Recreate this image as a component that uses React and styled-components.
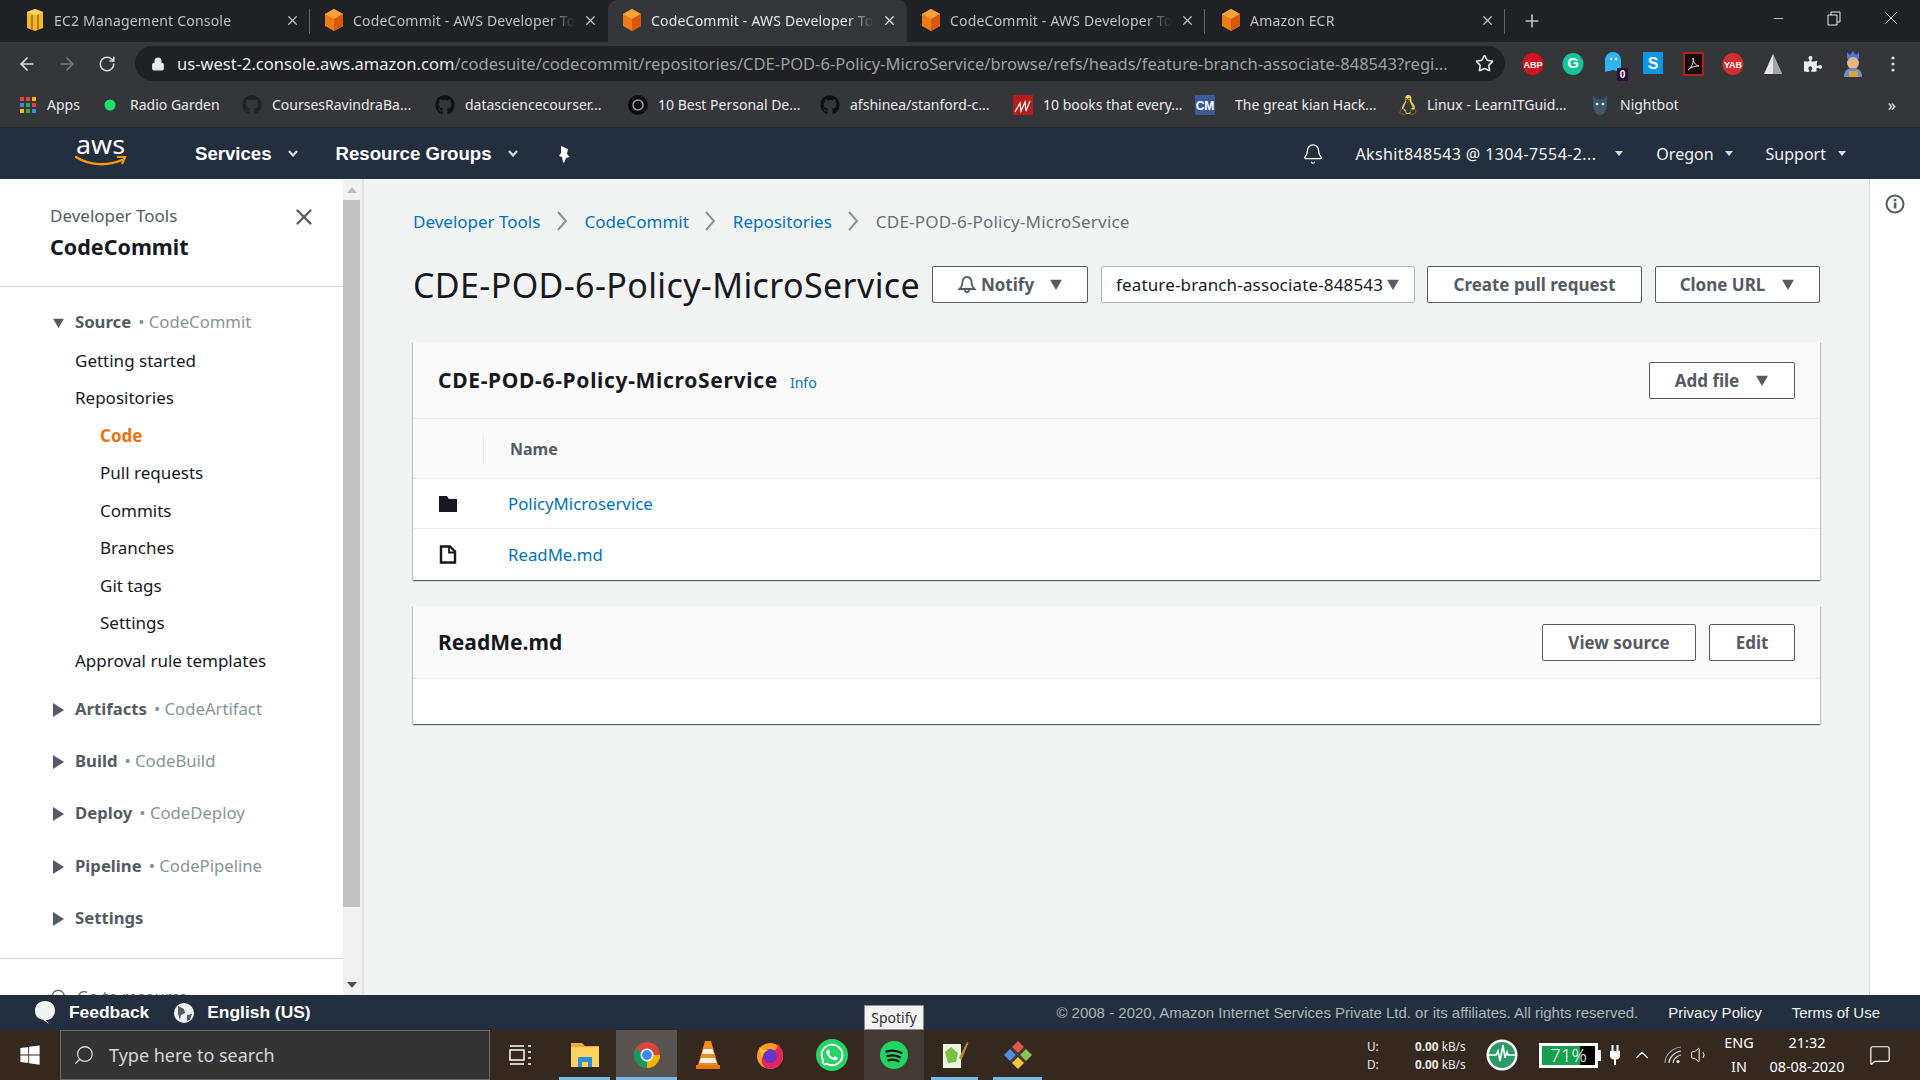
import React from 'react';
import styled, { createGlobalStyle } from 'styled-components';
import { FaGithub, FaWhatsapp, FaWindows, FaPuzzlePiece, FaLinux } from 'react-icons/fa';
import { ArrowLeft, ArrowRight, RotateCw, Lock, Star, Plus, Minus, X, Search, Bell, Volume1, ChevronUp, MessageSquare } from 'lucide-react';

const GlobalStyle = createGlobalStyle`
  html, body { margin: 0; padding: 0; height: 100%; overflow: hidden; }
  * { box-sizing: border-box; }
`;

const UI = `"Noto Sans", "Open Sans", sans-serif`;
const ARIAL = `"Liberation Sans", Arial, sans-serif`;

const Page = styled.div`
  width: 1920px;
  height: 1080px;
  display: flex;
  flex-direction: column;
  overflow: hidden;
  font-family: ${UI};
`;

/* browser chrome */
const TabStrip = styled.div`
  height: 42px;
  background: #202124;
  display: flex;
  align-items: stretch;
  padding-left: 18px;
  flex-shrink: 0;
`;

const Tab = styled.div`
  width: ${({ $w }) => $w}px;
  display: flex;
  align-items: center;
  gap: ${({ $gap }) => $gap || 7}px;
  padding: 0 10px 2px ${({ $pl }) => $pl || 9}px;
  font-size: 14px;
  letter-spacing: 0.2px;
  color: ${({ $active }) => ($active ? '#e8eaed' : '#bdc1c6')};
  background: ${({ $active }) => ($active ? '#35363a' : 'transparent')};
  border-radius: ${({ $active }) => ($active ? '9px 9px 0 0' : '0')};
  position: relative;
  &::after {
    content: '';
    display: ${({ $sep }) => ($sep ? 'block' : 'none')};
    position: absolute;
    right: 0;
    top: 9px;
    height: 25px;
    width: 1px;
    background: #5f6368;
  }
`;

const TabTitle = styled.span`
  flex: 1;
  overflow: hidden;
  white-space: nowrap;
  mask-image: linear-gradient(90deg, #000 88%, transparent);
`;

const NewTab = styled.div`
  width: 54px;
  display: flex;
  align-items: center;
  justify-content: center;
  color: #bdc1c6;
`;

const WindowControls = styled.div`
  margin-left: auto;
  display: flex;
  align-items: flex-start;
  color: #e8eaed;
`;

const WindowButton = styled.div`
  width: ${({ $w }) => $w || 56}px;
  height: 36px;
  display: flex;
  align-items: center;
  justify-content: center;
`;

const AddressRow = styled.div`
  height: 43px;
  background: #35363a;
  display: flex;
  align-items: center;
  padding-left: 7px;
  flex-shrink: 0;
`;

const NavIcon = styled.div`
  width: 40px;
  display: flex;
  justify-content: center;
  color: ${({ $dim }) => ($dim ? '#75777a' : '#dadce0')};
`;

const Omnibox = styled.div`
  width: 1370px;
  height: 35px;
  margin-left: 8px;
  border-radius: 18px;
  background: #202124;
  display: flex;
  align-items: center;
  padding: 0 11px 0 16px;
  font-size: 16.55px;
  color: #9aa0a6;
`;

const Url = styled.div`
  flex: 1;
  margin-left: 12px;
  white-space: nowrap;
  overflow: hidden;
  span { color: #e8eaed; }
`;

const Extensions = styled.div`
  display: flex;
  align-items: center;
  padding-left: 8px;
`;

const ExtSlot = styled.div`
  width: 40px;
  height: 34px;
  position: relative;
  display: flex;
  align-items: center;
  justify-content: center;
`;

const ExtBadge = styled.span`
  position: absolute;
  right: 5px;
  bottom: 0;
  width: 11px;
  height: 13px;
  background: #2b0f3a;
  color: #fff;
  font: bold 10px/13px ${ARIAL};
  text-align: center;
`;

const BookmarkRow = styled.div`
  height: 43px;
  background: #35363a;
  border-bottom: 1px solid #2a2b2e;
  display: flex;
  align-items: center;
  padding: 0 0 3px 20px;
  flex-shrink: 0;
  color: #e8eaed;
  font-size: 14px;
`;

const Bookmark = styled.div`
  width: ${({ $w }) => $w}px;
  display: flex;
  align-items: center;
  gap: ${({ $gap }) => $gap || 10}px;
  white-space: nowrap;
`;

const BookmarkMore = styled.div`
  margin-left: auto;
  margin-right: 24px;
  font-size: 16px;
`;

/* aws top nav */
const AwsNav = styled.div`
  height: 51px;
  background: #232f3e;
  display: flex;
  align-items: center;
  padding-left: 75px;
  flex-shrink: 0;
  color: #fff;
`;

const AwsLogoBox = styled.div`
  width: 120px;
  display: flex;
  flex-direction: column;
  margin-top: -6px;
`;

const NavMenu = styled.div`
  display: flex;
  align-items: center;
  gap: 16px;
  margin-right: ${({ $mr }) => $mr || 0}px;
  font-family: ${ARIAL};
  font-weight: 700;
  font-size: 18.6px;
`;

const NavRight = styled.div`
  margin-left: auto;
  display: flex;
  align-items: center;
  padding-right: 74px;
  font-size: 16px;
  color: #f2f3f3;
`;

const NavPick = styled.div`
  display: flex;
  align-items: center;
  gap: ${({ $gap }) => $gap}px;
  margin-left: ${({ $ml }) => $ml}px;
  white-space: nowrap;
  letter-spacing: ${({ $ls }) => $ls || 0}px;
`;

const Caret = styled.i`
  width: 0;
  height: 0;
  display: inline-block;
  border-left: ${({ $s }) => $s || 4}px solid transparent;
  border-right: ${({ $s }) => $s || 4}px solid transparent;
  border-top: ${({ $s }) => ($s || 4) + 1}px solid ${({ $c }) => $c || '#d5dbdb'};
`;

/* body */
const Body = styled.div`
  flex: 1;
  min-height: 0;
  display: flex;
`;

const Sidebar = styled.aside`
  width: 343px;
  background: #fff;
  display: flex;
  flex-direction: column;
  overflow: hidden;
  flex-shrink: 0;
`;

const SideHead = styled.div`
  height: 108px;
  border-bottom: 1px solid #d5dbdb;
  padding: 26px 26px 0 50px;
  display: flex;
  justify-content: space-between;
  flex-shrink: 0;
`;

const SideKicker = styled.div`
  font-size: 17px;
  line-height: 23px;
  margin-top: -1px;
  color: #545b64;
`;

const SideTitle = styled.div`
  font-size: 21.5px;
  line-height: 30px;
  margin-top: 5px;
  font-weight: 700;
  color: #16191f;
`;

const CloseIcon = styled(X)`
  margin-top: -1px;
`;

const SideNav = styled.nav`
  padding: 15px 0 14px 50px;
  border-bottom: 1px solid #d5dbdb;
  flex-shrink: 0;
`;

const SectionRow = styled.div`
  height: ${({ $open }) => ($open ? 39.5 : 52.4)}px;
  display: flex;
  align-items: center;
  font-size: 16.7px;
  font-weight: 700;
  color: #545b64;
  white-space: nowrap;
`;

const Arrow = styled.span`
  width: 25px;
  display: flex;
  align-items: center;
  padding: 3px 0 0 ${({ $pl }) => $pl || 3}px;
`;

const SectionService = styled.span`
  font-weight: 400;
  color: #879596;
  margin-left: 7px;
`;

const SideLink = styled.div`
  height: 37.5px;
  display: flex;
  align-items: center;
  padding-left: ${({ $depth }) => ($depth === 2 ? 50 : 25)}px;
  font-size: 17px;
  font-weight: ${({ $active }) => ($active ? 700 : 400)};
  color: ${({ $active }) => ($active ? '#ec7211' : '#16191f')};
`;

const SectionGap = styled.div`
  height: 3px;
`;

const SideResource = styled.div`
  padding: 27px 0 0 50px;
  display: flex;
  align-items: center;
  gap: 9px;
  font-size: 16px;
  color: #687078;
`;

const Scrollbar = styled.div`
  width: 21px;
  background: #f1f1f1;
  border-right: 2px solid #e1e4e4;
  display: flex;
  flex-direction: column;
  align-items: center;
  padding: 0 2px 0 0;
  flex-shrink: 0;
  justify-content: space-between;
`;

const ScrollThumb = styled.div`
  width: 17px;
  height: 707px;
  background: #c1c1c1;
`;

const ScrollArrow = styled.div`
  height: 21px;
  display: flex;
  align-items: center;
  justify-content: center;
`;

const Main = styled.main`
  flex: 1;
  background: #f2f3f3;
  padding: 29px 49px 0 49px;
  min-width: 0;
`;

const Crumbs = styled.div`
  display: flex;
  align-items: center;
  height: 26px;
  font-size: 17px;
  color: #687078;
  white-space: nowrap;
`;

const CrumbLink = styled.a`
  color: #0073bb;
`;

const CrumbCurrent = styled.span`
  letter-spacing: 0.2px;
`;

const CrumbSep = styled.span`
  width: 44px;
  display: flex;
  justify-content: center;
`;

const TitleRow = styled.div`
  display: flex;
  align-items: center;
  height: 37px;
  margin-top: 32px;
`;

const PageTitle = styled.h1`
  margin: 0;
  width: 519px;
  font-size: 34px;
  letter-spacing: 0.38px;
  font-weight: 400;
  color: #16191f;
  white-space: nowrap;
`;

const Btn = styled.button`
  width: ${({ $w }) => $w}px;
  height: 37px;
  margin-left: ${({ $ml }) => $ml || 0}px;
  border: 1px solid ${({ $select }) => ($select ? '#aab7b8' : '#545b64')};
  border-radius: 2px;
  background: #fff;
  font-family: ${UI};
  font-size: 17px;
  font-weight: ${({ $select }) => ($select ? 400 : 700)};
  color: ${({ $select }) => ($select ? '#16191f' : '#545b64')};
  display: flex;
  align-items: center;
  justify-content: center;
  gap: ${({ $gap }) => $gap || 0}px;
  padding: 0;
  white-space: nowrap;
  letter-spacing: ${({ $select }) => ($select ? '0.15px' : '0')};
`;

const BtnCaret = styled.span`
  display: flex;
  margin-left: ${({ $ml }) => $ml || 0}px;
`;

const Card = styled.section`
  margin-top: ${({ $mt }) => $mt}px;
  background: #fff;
  box-shadow: 0 1px 1px 0 rgba(0, 28, 36, 0.5), 1px 1px 1px 0 rgba(0, 28, 36, 0.15), -1px 1px 1px 0 rgba(0, 28, 36, 0.15);
`;

const CardHead = styled.div`
  height: ${({ $h }) => $h}px;
  background: #fafafa;
  border-bottom: 1px solid #eaeded;
  display: flex;
  align-items: center;
  padding: 0 25px;
  gap: 12px;
`;

const CardTitle = styled.h2`
  margin: 0;
  font-size: 21px;
  font-weight: 700;
  color: #16191f;
  letter-spacing: ${({ $ls }) => $ls || 0}px;
`;

const InfoLink = styled.a`
  font-size: 14px;
  color: #0073bb;
  padding-top: 4px;
`;

const CardActions = styled.div`
  margin-left: auto;
  display: flex;
  gap: 13px;
`;

const NameHeader = styled.div`
  height: 60px;
  background: #fafafa;
  border-bottom: 1px solid #eaeded;
  display: flex;
  align-items: center;
  padding-left: 70px;
`;

const NameLabel = styled.div`
  height: 30px;
  border-left: 1px solid #eaeded;
  padding-left: 26px;
  display: flex;
  align-items: center;
  font-size: 16px;
  font-weight: 700;
  color: #545b64;
`;

const FileRow = styled.div`
  height: ${({ $h }) => $h}px;
  display: flex;
  align-items: center;
  padding-left: 26px;
  border-bottom: ${({ $last }) => ($last ? 'none' : '1px solid #eaeded')};
`;

const FileIconBox = styled.span`
  width: 69px;
  display: flex;
`;

const FileLink = styled.a`
  font-size: 16.8px;
  color: #0073bb;
`;

const CardBody = styled.div`
  height: 45px;
`;

const ToolRail = styled.aside`
  width: 51px;
  background: #fff;
  border-left: 1px solid #d5dbdb;
  display: flex;
  justify-content: center;
  padding-top: 15px;
  flex-shrink: 0;
`;

/* footer */
const Footer = styled.footer`
  height: 35px;
  background: #232f3e;
  display: flex;
  align-items: center;
  padding: 0 40px 0 35px;
  font-family: ${ARIAL};
  color: #fff;
  flex-shrink: 0;
  position: relative;
`;

const FooterItem = styled.div`
  display: flex;
  align-items: center;
  gap: ${({ $gap }) => $gap}px;
  margin-right: ${({ $mr }) => $mr}px;
  font-size: 17.4px;
  font-weight: 700;
`;

const FooterCopy = styled.div`
  margin-left: auto;
  font-size: 15px;
  color: #aab7b8;
`;

const FooterLink = styled.a`
  margin-left: ${({ $ml }) => $ml}px;
  font-size: 15px;
  color: #f2f3f3;
`;

const Tooltip = styled.div`
  position: absolute;
  left: 864px;
  top: 10px;
  width: 60px;
  height: 25px;
  background: #f2f2f2;
  border: 1px solid #8d8d8d;
  color: #333;
  font-family: ${UI};
  font-size: 14px;
  display: flex;
  align-items: center;
  justify-content: center;
`;

/* taskbar */
const Taskbar = styled.div`
  height: 50px;
  background: #35281f;
  display: flex;
  align-items: stretch;
  flex-shrink: 0;
  color: #fff;
`;

const StartBtn = styled.div`
  width: 60px;
  display: flex;
  align-items: center;
  justify-content: center;
`;

const SearchBox = styled.div`
  width: 430px;
  background: #343434;
  border: 1px solid #6a6a6a;
  display: flex;
  align-items: center;
  gap: 14px;
  padding-left: 12px;
  font-size: 18px;
  color: #d6d6d6;
  margin-right: 3px;
`;

const SearchGlass = styled(Search)`
  transform: scaleX(-1);
`;

const TaskSlot = styled.div`
  width: ${({ $w }) => $w || 51}px;
  position: relative;
  display: flex;
  align-items: center;
  justify-content: center;
  background: ${({ $bg }) => $bg || 'transparent'};
  margin: 0 ${({ $mr }) => $mr || 0}px 0 ${({ $ml }) => $ml || 0}px;
  &::after {
    content: '';
    display: ${({ $open }) => ($open ? 'block' : 'none')};
    position: absolute;
    left: ${({ $inset }) => $inset || 0}px;
    right: ${({ $inset }) => $inset || 0}px;
    bottom: 0;
    height: 3px;
    background: #76b9ed;
  }
`;

const WhatsappBadge = styled(FaWhatsapp)`
  background: #25d366;
  border-radius: 50%;
  padding: 3px;
`;

const Tray = styled.div`
  margin-left: auto;
  display: flex;
  align-items: center;
  font-family: ${UI};
`;

const NetSpeed = styled.div`
  width: 99px;
  margin-right: 20px;
  display: grid;
  grid-template-columns: 48px 1fr;
  row-gap: 4px;
  font-size: 11.8px;
  line-height: 14px;
  color: #e8e8e8;
  white-space: nowrap;
  b { font-weight: 700; }
`;

const Battery = styled.div`
  width: 59px;
  height: 25px;
  border: 3px solid #fff;
  background: linear-gradient(90deg, #18a04c 71%, #000 71%);
  position: relative;
  margin-left: 21px;
  display: flex;
  align-items: center;
  justify-content: center;
  font-size: 19px;
  font-weight: 300;
  color: #fff;
  &::after {
    content: '';
    position: absolute;
    right: -6px;
    top: 4px;
    width: 3px;
    height: 11px;
    background: #fff;
  }
`;

const TrayIcon = styled.div`
  width: ${({ $w }) => $w}px;
  display: flex;
  justify-content: center;
  margin-left: ${({ $ml }) => $ml || 0}px;
`;

const TrayText = styled.div`
  text-align: center;
  width: ${({ $w }) => $w}px;
  margin-left: ${({ $ml }) => $ml || 0}px;
  font-size: 14.4px;
  line-height: 24px;
`;

const OmniStar = styled(Star)`
  margin-left: 12px;
`;

const UpCaret = styled(Caret)`
  transform: rotate(180deg);
`;

const AwsCube = ({ size = 22 }) => (
  <svg width={size} height={size + 2} viewBox="0 0 20 24">
    <path d="M10 1l9 5v12l-9 5-9-5V6z" fill="#ef7b15" />
    <path d="M10 1l9 5-9 5-9-5z" fill="#f9a13a" />
    <path d="M10 11l9-5v12l-9 5z" fill="#d9590c" />
  </svg>
);

const Ec2Cube = () => (
  <svg width={20} height={24} viewBox="0 0 20 24">
    <path d="M2 4l8-3 8 3v16l-8 3-8-3z" fill="#f7b529" />
    <path d="M2 4l8-3 8 3-8 3z" fill="#fbd266" />
    <path d="M7 7v15M13 7v15" stroke="#9a6a10" strokeWidth="1.5" />
  </svg>
);

const Circle = ({ bg, label, size = 12 }) => (
  <svg width="22" height="24" viewBox="0 0 22 24">
    <ellipse cx="11" cy="12" rx="10.5" ry="11" fill={bg} />
    <text x="11" y="16" textAnchor="middle" fontSize={size} fontWeight="700" fill="#fff" fontFamily="Liberation Sans">{label}</text>
  </svg>
);

const AppsGrid = () => (
  <svg width="16" height="16" viewBox="0 0 16 16">
    {['#ea4335', '#ea4335', '#fbbc05', '#4285f4', '#34a853', '#ea4335', '#fbbc05', '#34a853', '#4285f4'].map((c, i) => (
      <rect key={i} x={(i % 3) * 6} y={Math.floor(i / 3) * 6} width="4" height="4" fill={c} />
    ))}
  </svg>
);

const AwsLogo = () => (
  <svg width="52" height="32" viewBox="0 0 52 32">
    <text x="1" y="19" fontSize="25" fill="#fff" fontFamily="Noto Sans" textLength="49" lengthAdjust="spacingAndGlyphs">aws</text>
    <path d="M1 22c14 9 32 9 46 3" fill="none" stroke="#f90" strokeWidth="2.4" strokeLinecap="round" />
    <path d="M42 22l8 0-3 7" fill="none" stroke="#f90" strokeWidth="2.2" />
  </svg>
);

const MenuChevron = () => (
  <svg width="10" height="7" viewBox="0 0 10 7" fill="none" stroke="#d5dbdb" strokeWidth="2.2"><path d="M1 1l4 4.500L9 1" /></svg>
);

const Pin = () => (
  <svg width="16" height="18" viewBox="0 0 16 18" fill="#fff">
    <path d="M4 1l7 3-1 5 3 3-4 1-2 5-1-1-1-5-3-1 2-3z" />
  </svg>
);

const InfoCircle = () => (
  <svg width="20" height="20" viewBox="0 0 20 20">
    <circle cx="10" cy="10" r="8.5" fill="none" stroke="#545b64" strokeWidth="2" />
    <rect x="8.8" y="8.5" width="2.6" height="6" fill="#545b64" />
    <rect x="8.8" y="5" width="2.6" height="2.2" fill="#545b64" />
  </svg>
);

const BellOutline = () => (
  <svg width="20" height="20" viewBox="0 0 20 20" fill="none" stroke="#545b64" strokeWidth="1.8">
    <path d="M10 2c3 0 4.5 2.5 4.5 5.5 0 3 1 4.5 3 6.5h-15c2-2 3-3.500 3-6.500C5.500 4.500 7 2 10 2z" />
    <path d="M8 14.500c0 3.500 4 3.500 4 0" />
  </svg>
);

const FolderIcon = () => (
  <svg width="18" height="17" viewBox="0 0 18 17">
    <path d="M0 1h8l2 3h8v13H0z" fill="#16191f" />
  </svg>
);

const FileIcon = () => (
  <svg width="18" height="19" viewBox="0 0 18 19" fill="none" stroke="#16191f" strokeWidth="2.4">
    <path d="M2 1.500h9l5 5v11H2z" />
    <path d="M10 1.500v6h6" strokeWidth="1.800" />
  </svg>
);

const TriDown = ({ s = 16 }) => (
  <svg width={s} height={s - 3} viewBox="0 0 16 13"><path d="M1 1h14L8 13z" fill="#545b64" /></svg>
);

const TriRight = () => (
  <svg width="11" height="14" viewBox="0 0 11 14"><path d="M0 0l11 7-11 7z" fill="#545b64" /></svg>
);

const CrumbChevron = () => (
  <svg width="11" height="20" viewBox="0 0 11 20" fill="none" stroke="#879596" strokeWidth="2">
    <path d="M1 1l8 9-8 9" />
  </svg>
);

const ChromeIcon = () => (
  <svg width="28" height="28" viewBox="0 0 28 28">
    <circle cx="14" cy="14" r="13" fill="#db4437" />
    <path d="M14 14L2.700 7.500A13 13 0 0 0 14 27z" fill="#0f9d58" />
    <path d="M14 14h13A13 13 0 0 1 14 27z" fill="#f4b400" />
    <circle cx="14" cy="14" r="6.500" fill="#fff" />
    <circle cx="14" cy="14" r="5" fill="#4285f4" />
  </svg>
);

const VlcIcon = () => (
  <svg width="26" height="30" viewBox="0 0 26 30">
    <path d="M10 1h6l7 24H3z" fill="#f28a1c" />
    <path d="M8.500 9h9l1.500 5H7zM6 18h14l1.500 5h-17z" fill="#f3f3f3" />
    <path d="M1 25h24v4H1z" fill="#e8770e" />
  </svg>
);

const FirefoxIcon = () => (
  <svg width="30" height="30" viewBox="0 0 30 30">
    <circle cx="15" cy="16" r="13" fill="#ff9a1f" />
    <path d="M15 29a13 13 0 0 0 13-13c0-6-3-10-6-13 1 4 0 6-2 7l-5 2C9 13 6 17 7 23c1 3 4 6 8 6z" fill="#e6245e" />
    <circle cx="15" cy="16" r="7" fill="#6b34c9" />
    <path d="M4 7c3 3 6 3 9 3-3 2-6 4-6 8z" fill="#ffc32e" />
  </svg>
);

const SpotifyIcon = () => (
  <svg width="28" height="28" viewBox="0 0 28 28">
    <circle cx="14" cy="14" r="14" fill="#1ed760" />
    <g fill="none" stroke="#191414" strokeWidth="2.400" strokeLinecap="round">
      <path d="M6.500 10.500c5-1.500 10.500-1 15 1.500" />
      <path d="M7.500 15c4-1 8.500-.8 12.500 1.300" />
      <path d="M8.500 19.200c3.500-.8 7-.5 10 1" />
    </g>
  </svg>
);

const ExplorerIcon = () => (
  <svg width="28" height="28" viewBox="0 0 28 28">
    <path d="M0 2h11l3 3h14v5H0z" fill="#e9a93a" />
    <path d="M0 6h28v20H0z" fill="#fbd35e" />
    <path d="M7 16h14v10h-4v-5h-6v5H7z" fill="#2f8fd8" />
  </svg>
);

const NotepadIcon = () => (
  <svg width="28" height="30" viewBox="0 0 28 30">
    <path d="M2 4h18v24H2z" fill="#eaf3e0" />
    <path d="M4 12l6-5 7 6-2 9-8 1z" fill="#7cc242" />
    <path d="M18 18l8-16 1.500 1-7 17z" fill="#b98a2c" />
  </svg>
);

const GitKrakenIcon = () => (
  <svg width="30" height="30" viewBox="0 0 30 30">
    <path d="M15 1l6 6-6 6-6-6z" fill="#e3574a" />
    <path d="M7 9l6 6-6 6-6-6z" fill="#4a8fe3" />
    <path d="M23 9l6 6-6 6-6-6z" fill="#8cc152" />
    <path d="M15 17l6 6-6 6-6-6z" fill="#f2c53d" />
    <path d="M8 8l14 14M22 8L8 22" stroke="#444" strokeWidth="1.500" />
  </svg>
);

const TaskViewIcon = () => (
  <svg width="22" height="24" viewBox="0 0 22 24" fill="none" stroke="#fff" strokeWidth="1.500">
    <rect x="1" y="7" width="14" height="10" />
    <path d="M1 3h14M1 21h14M19 3h3M19 9h3M19 15h3M19 21h3" />
  </svg>
);

const MonitorIcon = () => (
  <svg width="32" height="32" viewBox="0 0 32 32">
    <circle cx="16" cy="16" r="15.500" fill="#fff" />
    <circle cx="16" cy="16" r="13" fill="#2a9a68" />
    <path d="M3 16h7l2-4 2 10 3-16 2 13 2-6 1 3h7" fill="none" stroke="#fff" strokeWidth="1.600" />
  </svg>
);

const PlugGlyph = () => (
  <svg width="12" height="22" viewBox="0 0 12 22" fill="#fff">
    <rect x="2.500" y="1" width="2" height="6" />
    <rect x="7.500" y="1" width="2" height="6" />
    <path d="M1 7h10v5c0 2-2 3.500-3.500 3.500H7V21H5v-5.500h-.5C3 15.500 1 14 1 12z" />
  </svg>
);

const WifiArcs = () => (
  <svg width="20" height="20" viewBox="0 0 20 20" fill="none" stroke="#d8d8d8" strokeWidth="1.200">
    <path d="M2 18C2 10 9 3 18 2" opacity="0.7" />
    <path d="M6 18c0-5 5-11 12-12" />
    <path d="M10 18c0-3 3-7 8-8" />
    <circle cx="15" cy="16.500" r="1.500" fill="#fff" stroke="none" />
  </svg>
);

const tabs = [
  { w: 292, icon: <Ec2Cube />, title: 'EC2 Management Console', pl: 7, gap: 9, sep: true },
  { w: 298, icon: <AwsCube />, title: 'CodeCommit - AWS Developer Tools', pl: 13, gap: 8 },
  { w: 299, icon: <AwsCube />, title: 'CodeCommit - AWS Developer Tools', active: true, pl: 13, gap: 8 },
  { w: 298, icon: <AwsCube />, title: 'CodeCommit - AWS Developer Tools', pl: 13, gap: 8, sep: true },
  { w: 300, icon: <AwsCube />, title: 'Amazon ECR', pl: 15, gap: 8, sep: true },
];

function Dot() {
  return <svg width="12" height="12" viewBox="0 0 12 12"><circle cx="6" cy="6" r="5.500" fill="#19e36b" /></svg>;
}
function Target() {
  return (
    <svg width="20" height="20" viewBox="0 0 20 20">
      <circle cx="10" cy="10" r="10" fill="#0b0b0b" />
      <circle cx="10" cy="10" r="5" fill="none" stroke="#9aa0a6" strokeWidth="1.500" />
    </svg>
  );
}
function BookIcon() {
  return (
    <svg width="20" height="20" viewBox="0 0 20 20">
      <rect width="20" height="20" fill="#b3201a" />
      <path d="M2 17l5-9 1 8 4-9 1 9 4-10" fill="none" stroke="#fff" strokeWidth="1.200" />
    </svg>
  );
}
function CmIcon() {
  return (
    <svg width="20" height="20" viewBox="0 0 20 20">
      <rect width="20" height="20" fill="#3d5a99" />
      <text x="10" y="15" textAnchor="middle" fontSize="12" fontWeight="700" fill="#fff" fontFamily="Liberation Sans">CM</text>
    </svg>
  );
}
function BotIcon() {
  return (
    <svg width="20" height="22" viewBox="0 0 20 22">
      <path d="M3 1l3 4h8l3-4v10c0 5-3 10-7 10S3 16 3 11z" fill="#3d5670" />
      <circle cx="7" cy="10" r="1.300" fill="#cfe" />
      <circle cx="13" cy="10" r="1.300" fill="#cfe" />
    </svg>
  );
}

const bookmarks = [
  { w: 84, gap: 11, icon: <AppsGrid />, label: 'Apps' },
  { w: 138, gap: 14, icon: <Dot />, label: 'Radio Garden' },
  { w: 193, icon: <FaGithub size={20} color="#202124" />, label: 'CoursesRavindraBa...' },
  { w: 193, icon: <FaGithub size={20} color="#111" />, label: 'datasciencecourser...' },
  { w: 192, icon: <Target />, label: '10 Best Personal De...' },
  { w: 193, icon: <FaGithub size={20} color="#111" />, label: 'afshinea/stanford-c...' },
  { w: 182, icon: <BookIcon />, label: '10 books that every...' },
  { w: 203, gap: 20, icon: <CmIcon />, label: 'The great kian Hack...' },
  { w: 192, gap: 9, icon: <FaLinux size={20} color="#f6d04d" />, label: 'Linux - LearnITGuid...' },
  { w: 120, icon: <BotIcon />, label: 'Nightbot' },
];

const sections = [
  { name: 'Artifacts', svc: 'CodeArtifact' },
  { name: 'Build', svc: 'CodeBuild' },
  { name: 'Deploy', svc: 'CodeDeploy' },
  { name: 'Pipeline', svc: 'CodePipeline' },
  { name: 'Settings' },
];

export default function App() {
  return (
    <Page>
      <GlobalStyle />
      <TabStrip>
        {tabs.map((t, i) => (
          <Tab key={i} $w={t.w} $active={t.active} $pl={t.pl} $gap={t.gap} $sep={t.sep}>
            {t.icon}
            <TabTitle>{t.title}</TabTitle>
            <X size={15} strokeWidth={2} />
          </Tab>
        ))}
        <NewTab><Plus size={20} /></NewTab>
        <WindowControls>
          <WindowButton><Minus size={15} strokeWidth={1.2} /></WindowButton>
          <WindowButton>
            <svg width="14" height="15" viewBox="0 0 14 15" fill="none" stroke="#e8eaed"><path d="M1 4h9v10H1zM4 4V1h9v10h-3" /></svg>
          </WindowButton>
          <WindowButton $w={58}><X size={22} strokeWidth={1} /></WindowButton>
        </WindowControls>
      </TabStrip>

      <AddressRow>
        <NavIcon><ArrowLeft size={20} /></NavIcon>
        <NavIcon $dim><ArrowRight size={20} /></NavIcon>
        <NavIcon><RotateCw size={18} /></NavIcon>
        <Omnibox>
          <Lock size={14} color="#e8eaed" fill="#e8eaed" />
          <Url><span>us-west-2.console.aws.amazon.com</span>/codesuite/codecommit/repositories/CDE-POD-6-Policy-MicroService/browse/refs/heads/feature-branch-associate-848543?regi...</Url>
          <OmniStar size={19} color="#e8eaed" />
        </Omnibox>
        <Extensions>
          <ExtSlot><Circle bg="#d3121d" label="ABP" size={9} /></ExtSlot>
          <ExtSlot><Circle bg="#15c39a" label="G" size={15} /></ExtSlot>
          <ExtSlot>
            <svg width="20" height="28" viewBox="0 0 20 28"><path d="M2 10a8 8 0 0 1 16 0v12l-8-2-8 2z" fill="#2fb4f0" /><circle cx="8" cy="9" r="1.200" fill="#fff" /><circle cx="13" cy="9" r="1.200" fill="#fff" /></svg>
            <ExtBadge>0</ExtBadge>
          </ExtSlot>
          <ExtSlot>
            <svg width="20" height="24" viewBox="0 0 20 24"><rect width="20" height="22" fill="#0b96e6" /><text x="10" y="17" textAnchor="middle" fontSize="16" fontWeight="700" fill="#fff" fontFamily="Liberation Sans">S</text></svg>
          </ExtSlot>
          <ExtSlot>
            <svg width="21" height="24" viewBox="0 0 21 24"><rect x="1" y="1" width="19" height="22" fill="#170c0a" stroke="#a8231a" strokeWidth="2" /><path d="M5 18c4-3 6-8 5-12 0 4 2 7 6 8-4 0-8 1-11 4z" fill="none" stroke="#e8e0dc" strokeWidth="1" /></svg>
          </ExtSlot>
          <ExtSlot><Circle bg="#d32f2f" label="YAB" size={9} /></ExtSlot>
          <ExtSlot>
            <svg width="20" height="22" viewBox="0 0 20 22"><path d="M10 1L1 21h18z" fill="#e6e6e6" /><path d="M10 1v20h9z" fill="#a5a5a5" /></svg>
          </ExtSlot>
          <ExtSlot><FaPuzzlePiece size={18} color="#e8eaed" /></ExtSlot>
          <ExtSlot>
            <svg width="24" height="30" viewBox="0 0 24 30"><path d="M6 3l3 3 3-4 3 4 3-3v7H6z" fill="#4c77d8" /><circle cx="12" cy="14" r="6" fill="#e8b48a" /><path d="M3 28c0-7 4-9 9-9s9 2 9 9z" fill="#6d8fc8" /><rect x="8" y="22" width="9" height="6" fill="#d9a441" /></svg>
          </ExtSlot>
          <ExtSlot>
            <svg width="4" height="16" viewBox="0 0 4 16" fill="#dadce0"><circle cx="2" cy="2" r="1.600" /><circle cx="2" cy="8" r="1.600" /><circle cx="2" cy="14" r="1.600" /></svg>
          </ExtSlot>
        </Extensions>
      </AddressRow>

      <BookmarkRow>
        {bookmarks.map((b) => (
          <Bookmark key={b.label} $w={b.w} $gap={b.gap}>
            {b.icon}
            <span>{b.label}</span>
          </Bookmark>
        ))}
        <BookmarkMore>»</BookmarkMore>
      </BookmarkRow>

      <AwsNav>
        <AwsLogoBox><AwsLogo /></AwsLogoBox>
        <NavMenu $mr={38}>Services <MenuChevron /></NavMenu>
        <NavMenu $mr={39}>Resource Groups <MenuChevron /></NavMenu>
        <Pin />
        <NavRight>
          <Bell size={22} strokeWidth={1.4} color="#fff" />
          <NavPick $gap={19} $ml={31} $ls={0.4}>Akshit848543 @ 1304-7554-2... <Caret /></NavPick>
          <NavPick $gap={11} $ml={33}>Oregon <Caret /></NavPick>
          <NavPick $gap={12} $ml={33}>Support <Caret /></NavPick>
        </NavRight>
      </AwsNav>

      <Body>
        <Sidebar>
          <SideHead>
            <div>
              <SideKicker>Developer Tools</SideKicker>
              <SideTitle>CodeCommit</SideTitle>
            </div>
            <CloseIcon size={26} strokeWidth={2.2} color="#545b64" />
          </SideHead>
          <SideNav>
            <SectionRow $open>
              <Arrow $pl={2}><TriDown s={13} /></Arrow>
              Source <SectionService>• CodeCommit</SectionService>
            </SectionRow>
            <SideLink>Getting started</SideLink>
            <SideLink>Repositories</SideLink>
            <SideLink $depth={2} $active>Code</SideLink>
            <SideLink $depth={2}>Pull requests</SideLink>
            <SideLink $depth={2}>Commits</SideLink>
            <SideLink $depth={2}>Branches</SideLink>
            <SideLink $depth={2}>Git tags</SideLink>
            <SideLink $depth={2}>Settings</SideLink>
            <SideLink>Approval rule templates</SideLink>
            <SectionGap />
            {sections.map((s) => (
              <SectionRow key={s.name}>
                <Arrow><TriRight /></Arrow>
                {s.name} {s.svc && <SectionService>• {s.svc}</SectionService>}
              </SectionRow>
            ))}
          </SideNav>
          <SideResource><Search size={18} color="#687078" />Go to resource</SideResource>
        </Sidebar>
        <Scrollbar>
          <div>
            <ScrollArrow><UpCaret $s={5} $c="#c1c1c1" /></ScrollArrow>
            <ScrollThumb />
          </div>
          <ScrollArrow><Caret $s={5} $c="#505050" /></ScrollArrow>
        </Scrollbar>
        <Main>
          <Crumbs>
            <CrumbLink>Developer Tools</CrumbLink>
            <CrumbSep><CrumbChevron /></CrumbSep>
            <CrumbLink>CodeCommit</CrumbLink>
            <CrumbSep><CrumbChevron /></CrumbSep>
            <CrumbLink>Repositories</CrumbLink>
            <CrumbSep><CrumbChevron /></CrumbSep>
            <CrumbCurrent>CDE-POD-6-Policy-MicroService</CrumbCurrent>
          </Crumbs>
          <TitleRow>
            <PageTitle>CDE-POD-6-Policy-MicroService</PageTitle>
            <Btn $w={156} $gap={4}><BellOutline /> Notify <BtnCaret $ml={11}><TriDown s={14} /></BtnCaret></Btn>
            <Btn $w={314} $ml={13} $select $gap={3}>feature-branch-associate-848543 <TriDown s={14} /></Btn>
            <Btn $w={215} $ml={12}>Create pull request</Btn>
            <Btn $w={165} $ml={13} $gap={16}>Clone URL <TriDown s={14} /></Btn>
          </TitleRow>
          <Card $mt={39}>
            <CardHead $h={77}>
              <CardTitle $ls={0.68}>CDE-POD-6-Policy-MicroService</CardTitle>
              <InfoLink>Info</InfoLink>
              <CardActions>
                <Btn $w={146} $gap={16}>Add file <TriDown s={14} /></Btn>
              </CardActions>
            </CardHead>
            <NameHeader><NameLabel>Name</NameLabel></NameHeader>
            <FileRow $h={50}>
              <FileIconBox><FolderIcon /></FileIconBox>
              <FileLink>PolicyMicroservice</FileLink>
            </FileRow>
            <FileRow $h={51} $last>
              <FileIconBox><FileIcon /></FileIconBox>
              <FileLink>ReadMe.md</FileLink>
            </FileRow>
          </Card>
          <Card $mt={26}>
            <CardHead $h={73}>
              <CardTitle>ReadMe.md</CardTitle>
              <CardActions>
                <Btn $w={154}>View source</Btn>
                <Btn $w={86}>Edit</Btn>
              </CardActions>
            </CardHead>
            <CardBody />
          </Card>
        </Main>
        <ToolRail><InfoCircle /></ToolRail>
      </Body>

      <Footer>
        <FooterItem $gap={14} $mr={25}>
          <svg width="20" height="23" viewBox="0 0 20 23"><path d="M10 0c6 0 10 4 10 9.500S16 19 11 19l3 4-6-4.300C3 18 0 15 0 9.500 0 4 4 0 10 0z" fill="#f2f3f3" /></svg>
          Feedback
        </FooterItem>
        <FooterItem $gap={13} $mr={0}>
          <svg width="20" height="22" viewBox="0 0 20 22"><circle cx="10" cy="11" r="10" fill="#f2f3f3" /><path d="M4 4l6 3 1 4-4 2-1 5-2-6zM13 13l5-1-2 6-3 1z" fill="#545b64" /></svg>
          English (US)
        </FooterItem>
        <Tooltip>Spotify</Tooltip>
        <FooterCopy>© 2008 - 2020, Amazon Internet Services Private Ltd. or its affiliates. All rights reserved.</FooterCopy>
        <FooterLink $ml={30}>Privacy Policy</FooterLink>
        <FooterLink $ml={30}>Terms of Use</FooterLink>
      </Footer>

      <Taskbar>
        <StartBtn><FaWindows size={22} /></StartBtn>
        <SearchBox>
          <SearchGlass size={22} strokeWidth={1.4} />
          Type here to search
        </SearchBox>
        <TaskSlot $w={54}><TaskViewIcon /></TaskSlot>
        <TaskSlot $w={51} $ml={12} $mr={6} $open><ExplorerIcon /></TaskSlot>
        <TaskSlot $w={61} $open $bg="#5a5450"><ChromeIcon /></TaskSlot>
        <TaskSlot $w={62}><VlcIcon /></TaskSlot>
        <TaskSlot $w={62}><FirefoxIcon /></TaskSlot>
        <TaskSlot $w={62} $mr={1}><WhatsappBadge size={32} color="#fff" /></TaskSlot>
        <TaskSlot $w={60} $bg="#433a33"><SpotifyIcon /></TaskSlot>
        <TaskSlot $w={61} $open $inset={7}><NotepadIcon /></TaskSlot>
        <TaskSlot $w={65} $open $inset={8}><GitKrakenIcon /></TaskSlot>
        <Tray>
          <NetSpeed>
            <span>U:</span><span><b>0.00</b> kB/s</span>
            <span>D:</span><span><b>0.00</b> kB/s</span>
          </NetSpeed>
          <MonitorIcon />
          <Battery>71%</Battery>
          <TrayIcon $w={20} $ml={7}><PlugGlyph /></TrayIcon>
          <TrayIcon $w={34}><ChevronUp size={22} strokeWidth={1.2} /></TrayIcon>
          <TrayIcon $w={28}><WifiArcs /></TrayIcon>
          <TrayIcon $w={26}><Volume1 size={20} strokeWidth={1.2} /></TrayIcon>
          <TrayText $w={40} $ml={6}>ENG<br />IN</TrayText>
          <TrayText $w={96}>21:32<br />08-08-2020</TrayText>
          <TrayIcon $w={50}><MessageSquare size={22} strokeWidth={1.3} /></TrayIcon>
          <TrayIcon $w={15} />
        </Tray>
      </Taskbar>
    </Page>
  );
}
